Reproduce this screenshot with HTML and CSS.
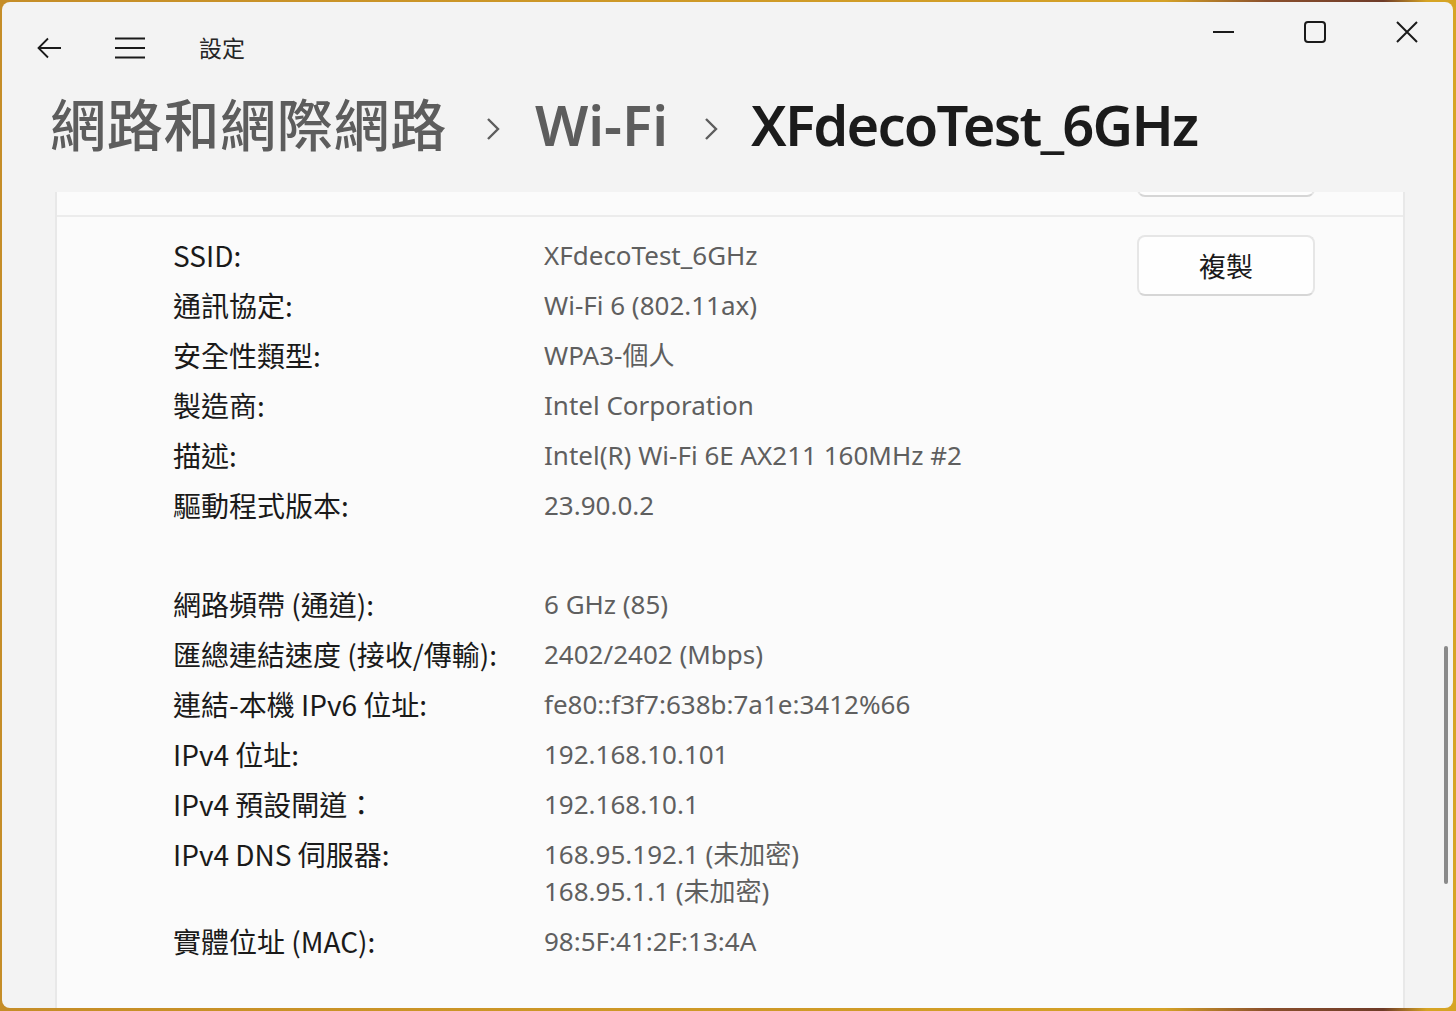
FILE: index.html
```html
<!DOCTYPE html>
<html lang="zh-Hant">
<head>
    <meta charset="UTF-8">
    <meta name="viewport" content="width=device-width, initial-scale=1.0">
    <title>設定</title>
    <link rel="stylesheet" href="styles.css">
</head>
<body>
    <div class="window">
        <header class="titlebar">
            <div class="nav">
                <span class="nav-btn back">
                    <svg width="25" height="22" viewBox="0 0 25 22"><path d="M11 1.5 L1.5 11 L11 20.5 M1.5 11 H24" /></svg>
                </span>
                <span class="nav-btn menu">
                    <svg width="30" height="22" viewBox="0 0 30 22"><path d="M0 1.5 H30 M0 11 H30 M0 20.5 H30" /></svg>
                </span>
                <span class="app-title">設定</span>
            </div>
            <div class="controls">
                <span class="ctl">
                    <svg width="21" height="4" viewBox="0 0 21 4"><path d="M0 2 H21" /></svg>
                </span>
                <span class="ctl">
                    <svg width="22" height="22" viewBox="0 0 22 22"><rect x="1" y="1" width="20" height="20" rx="3" /></svg>
                </span>
                <span class="ctl">
                    <svg width="22" height="22" viewBox="0 0 22 22"><path d="M1 1 L21 21 M21 1 L1 21" /></svg>
                </span>
            </div>
        </header>

        <h1 class="breadcrumb">
            <span class="crumb cjk">網路和網際網路</span>
            <svg class="chevron" width="14" height="26" viewBox="0 0 14 26"><path d="M2 3 L12 13 L2 23" /></svg>
            <span class="crumb">Wi-Fi</span>
            <svg class="chevron last" width="14" height="26" viewBox="0 0 14 26"><path d="M2 3 L12 13 L2 23" /></svg>
            <span class="crumb current">XFdecoTest_6GHz</span>
        </h1>

        <main class="scroll">
            <section class="card">
                <div class="card-row">
                    <button class="btn" aria-label="編輯"></button>
                </div>
                <div class="details">
                    <dl class="props">
                        <dt>SSID:</dt><dd>XFdecoTest_6GHz</dd>
                        <dt>通訊協定:</dt><dd>Wi-Fi 6 (802.11ax)</dd>
                        <dt>安全性類型:</dt><dd>WPA3-個人</dd>
                        <dt>製造商:</dt><dd>Intel Corporation</dd>
                        <dt>描述:</dt><dd>Intel(R) Wi-Fi 6E AX211 160MHz #2</dd>
                        <dt>驅動程式版本:</dt><dd>23.90.0.2</dd>
                        <div class="spacer"></div>
                        <dt>網路頻帶 (通道):</dt><dd>6 GHz (85)</dd>
                        <dt>匯總連結速度 (接收/傳輸):</dt><dd>2402/2402 (Mbps)</dd>
                        <dt>連結-本機 IPv6 位址:</dt><dd>fe80::f3f7:638b:7a1e:3412%66</dd>
                        <dt>IPv4 位址:</dt><dd>192.168.10.101</dd>
                        <dt>IPv4 預設閘道：</dt><dd>192.168.10.1</dd>
                        <dt>IPv4 DNS 伺服器:</dt><dd>168.95.192.1 (未加密)<br>168.95.1.1 (未加密)</dd>
                        <dt>實體位址 (MAC):</dt><dd>98:5F:41:2F:13:4A</dd>
                    </dl>
                    <button class="btn copy">複製</button>
                </div>
            </section>
            <div class="scrollbar"></div>
        </main>
    </div>
</body>
</html>
```

FILE: styles.css
```css
html, body {
    margin: 0;
    height: 100%;
}
body {
    box-sizing: border-box;
    padding: 2px 3px 3px 2px;
    background: linear-gradient(to right, #c58d27 0%, #d4a126 80%, #8a4f2c 87%, #6e3b29 95%, #d6a424 98%);
    font-family: "Noto Sans", "Noto Sans CJK TC", sans-serif;
    color: #1a1a1a;
    overflow: hidden;
}
.window {
    height: 100%;
    background-color: #f3f3f3;
    border-radius: 8px;
    overflow: hidden;
    display: flex;
    flex-direction: column;
}

/* title bar */
.titlebar {
    height: 84px;
    flex-shrink: 0;
    display: flex;
    justify-content: space-between;
    align-items: flex-start;
}
.nav {
    display: flex;
    align-items: center;
    height: 32px;
    padding: 30px 0 0 27px;
}
.nav-btn {
    width: 40px;
    height: 32px;
    display: flex;
    align-items: center;
    justify-content: center;
}
.nav-btn svg, .ctl svg {
    fill: none;
    stroke: #1a1a1a;
    stroke-width: 2;
}
.nav-btn.back svg {
    stroke-width: 1.8;
}
.nav-btn.menu {
    margin-left: 41px;
}
.app-title {
    margin-left: 49px;
    font-size: 23px;
    line-height: 32px;
    color: #262626;
}
.controls {
    display: flex;
}
.ctl {
    width: 92px;
    height: 60px;
    display: flex;
    align-items: center;
    justify-content: center;
}

/* breadcrumb header */
.breadcrumb {
    flex-shrink: 0;
    margin: 0;
    padding: 0 0 0 48px;
    height: 106px;
    box-sizing: border-box;
    display: flex;
    align-items: flex-start;
    font-size: 56px;
    font-weight: 600;
    line-height: 80px;
    white-space: nowrap;
}
.crumb {
    color: #5d5d5d;
    margin-top: -2px;
}
.crumb.cjk {
    font-weight: 500;
    letter-spacing: 0.7px;
}
.crumb.current {
    color: #1b1b1b;
    letter-spacing: -1.8px;
}
.chevron {
    margin: 30px 35px 0 39px;
    fill: none;
    stroke: #5d5d5d;
    stroke-width: 2.4;
}
.chevron.last {
    margin-left: 36px;
    margin-right: 33px;
}

/* content */
.scroll {
    flex: 1;
    position: relative;
    overflow: hidden;
}
.card {
    margin: -72px 48px 0 53px;
    background-color: #fbfbfb;
    border: 2px solid #e8e8e8;
    border-radius: 8px;
    height: 1000px;
}
.card-row {
    display: flex;
    justify-content: flex-end;
    padding: 14px 88px 18px 0;
}
.btn {
    width: 178px;
    height: 61px;
    box-sizing: border-box;
    background-color: #fefefe;
    border: 2px solid #e6e6e6;
    border-bottom-color: #d6d6d6;
    border-radius: 8px;
    font-family: "Noto Sans CJK TC", "Noto Sans", sans-serif;
    font-size: 27px;
    color: #1a1a1a;
    padding: 0;
}
.details {
    display: flex;
    align-items: flex-start;
    border-top: 2px solid #ececec;
    padding: 13px 88px 0 116px;
}
.props {
    flex: 1;
    margin: 0;
    display: grid;
    grid-template-columns: 371px 1fr;
    font-size: 26px;
    line-height: 37px;
}
.props dt, .props dd {
    margin: 0;
    padding: 6.5px 0;
    white-space: nowrap;
}
.props dt {
    font-family: "Noto Sans CJK TC", "Noto Sans", sans-serif;
    font-size: 28px;
    color: #1a1a1a;
}
.props dd {
    color: #5f5f5f;
}
.spacer {
    grid-column: 1 / -1;
    height: 49px;
}
.btn.copy {
    margin-top: 5px;
}
.scrollbar {
    position: absolute;
    left: 1442px;
    top: 454px;
    width: 4px;
    height: 238px;
    border-radius: 2px;
    background-color: #898989;
}
```
